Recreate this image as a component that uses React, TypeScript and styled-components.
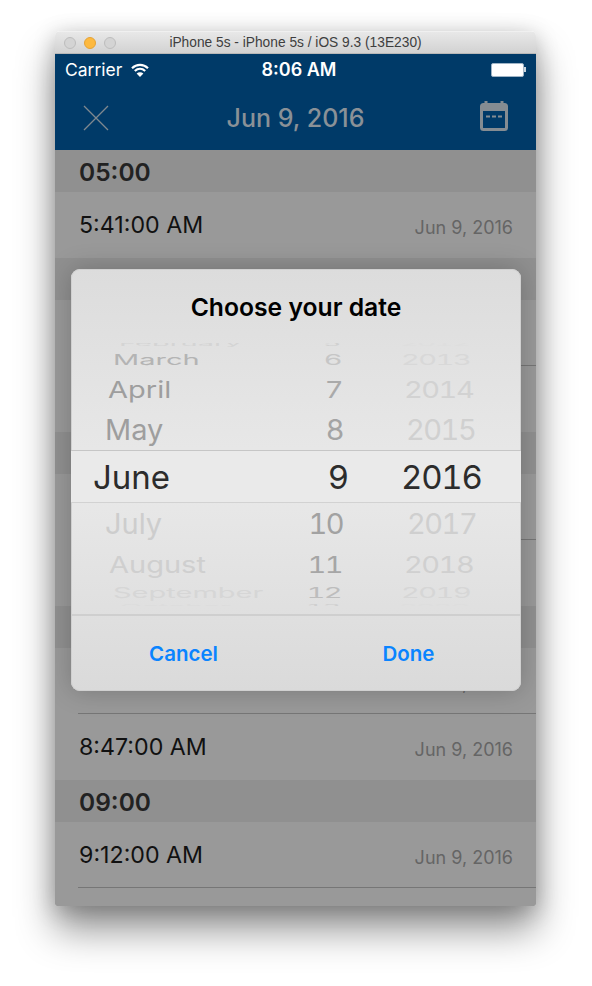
import React from 'react';
import styled, { createGlobalStyle } from 'styled-components';

const GlobalStyle = createGlobalStyle`
  html, body {
    margin: 0;
    background: #fff;
    font-family: 'Inter', 'Liberation Sans', sans-serif;
  }
`;

const Page = styled.div`
  width: 592px;
  height: 986px;
  padding: 31px 56px 0 55px;
  box-sizing: border-box;
  overflow: hidden;
`;

const SimWindow = styled.div`
  position: relative;
  height: 875px;
  border-radius: 5px 5px 2px 2px;
  overflow: hidden;
`;

const WindowShadow = styled.div`
  height: 875px;
  border-radius: 5px 5px 2px 2px;
  box-shadow: 0 24px 38px rgba(0, 0, 0, 0.42), 0 4px 22px rgba(0, 0, 0, 0.22);
`;

const TitleBar = styled.div`
  display: flex;
  align-items: center;
  justify-content: center;
  position: relative;
  height: 23px;
  box-sizing: border-box;
  background: linear-gradient(#e8e8e8, #d2d2d2);
  border-top: 1px solid #f0f0f0;
  border-bottom: 1px solid #b8b8b8;
  font: 400 13.75px 'Liberation Sans', sans-serif;
  color: #3e3e3e;
`;

const Lights = styled.div`
  position: absolute;
  left: 9px;
  top: 5px;
  display: flex;
  gap: 8px;
`;

const Light = styled.span<{ $on?: boolean }>`
  width: 12px;
  height: 12px;
  box-sizing: border-box;
  border-radius: 50%;
  background: ${({ $on }) => ($on ? '#fdb93f' : '#d4d4d4')};
  border: 1px solid ${({ $on }) => ($on ? '#e5a336' : '#bdbdbd')};
`;

const Header = styled.div`
  height: 96px;
  background: #003a68;
`;

const StatusBar = styled.div`
  display: grid;
  grid-template-columns: 1fr auto 1fr;
  align-items: center;
  height: 31px;
  padding: 0 10px;
  color: #fff;
`;

const Carrier = styled.div`
  display: flex;
  align-items: center;
  gap: 9px;
  font-size: 17.5px;
  font-weight: 400;
`;

const Clock = styled.div`
  padding-left: 7px;
  font-size: 18px;
  font-weight: 600;
`;

const Battery = styled.div`
  justify-self: end;
  display: flex;
  align-items: center;
`;

const BatteryBody = styled.span`
  width: 33px;
  height: 14px;
  box-sizing: border-box;
  background: #fff;
  border: 1px solid #9fb4c6;
  border-radius: 2px;
`;

const BatteryCap = styled.span`
  width: 2px;
  height: 5px;
  background: #c8d4de;
`;

const NavBar = styled.div`
  display: grid;
  grid-template-columns: 1fr auto 1fr;
  align-items: center;
  height: 65px;
  padding: 0 28px;
`;

const NavTitle = styled.div`
  font-size: 25px;
  font-weight: 500;
  color: #8a9197;
`;

const NavRight = styled.div`
  justify-self: end;
  display: flex;
  margin-bottom: 4px;
`;

const List = styled.div`
  height: 756px;
  background: #999;
  overflow: hidden;
`;

const Section = styled.div`
  display: flex;
  align-items: center;
  height: 42px;
  padding: 1px 0 0 24px;
  box-sizing: border-box;
  background: #909090;
  font-size: 24.5px;
  font-weight: 600;
  color: #222;
`;

const Row = styled.div<{ $line?: boolean }>`
  display: flex;
  align-items: center;
  justify-content: space-between;
  height: 66px;
  box-sizing: border-box;
  margin-left: 23px;
  padding: 0 23px 0 1px;
  border-bottom: 1px solid ${({ $line }) => ($line ? '#767676' : 'transparent')};
`;

const Time = styled.span`
  font-size: 23.2px;
  color: #111;
`;

const RowDate = styled.span`
  margin-top: 5px;
  font-size: 18px;
  color: #656565;
`;

const Modal = styled.div`
  position: absolute;
  left: 16px;
  top: 238px;
  width: 450px;
  height: 422px;
  box-sizing: border-box;
  display: flex;
  flex-direction: column;
  border-radius: 9px;
  overflow: hidden;
  background: linear-gradient(#dcdcdc, #e9e9e9 50%, #dadada);
  box-shadow: inset 0 0 0 1px #d0d0d0;
`;

const ModalGlow = styled.div`
  position: absolute;
  left: 16px;
  top: 238px;
  width: 450px;
  height: 422px;
  border-radius: 9px;
  box-shadow: 0 0 26px rgba(0, 0, 0, 0.22);
`;

const ModalTitle = styled.div`
  height: 74px;
  padding-top: 1px;
  box-sizing: border-box;
  display: flex;
  align-items: center;
  justify-content: center;
  font-size: 24.7px;
  font-weight: 600;
  color: #000;
`;

const Wheel = styled.div<{ $end?: boolean; $h: number }>`
  display: flex;
  flex-direction: column;
  height: ${({ $h }) => $h}px;
  justify-content: ${({ $end }) => ($end ? 'flex-end' : 'flex-start')};
  overflow: hidden;
  font-variant-numeric: tabular-nums;
`;

const WheelRow = styled.div<{ $h: number }>`
  flex: none;
  display: grid;
  grid-template-columns: 200px 80px 1fr;
  grid-template-rows: ${({ $h }) => $h}px;
  align-items: center;
  height: ${({ $h }) => $h}px;
`;

const Cell = styled.span<{ $scale: number; $color: string; $x: number }>`
  display: block;
  font-size: 29px;
  line-height: 1;
  white-space: nowrap;
  color: ${({ $color }) => $color};
  transform: translateX(${({ $x }) => $x}px) scaleY(${({ $scale }) => $scale});
`;

const YearCell = styled(Cell)`
  letter-spacing: -1.5px;
`;

const DayCell = styled(YearCell)`
  text-align: right;
`;

const Band = styled.div`
  display: grid;
  grid-template-columns: 200px 80px 1fr;
  align-items: center;
  height: 53px;
  padding-top: 1px;
  box-sizing: border-box;
  background: #eaeaea;
  border-top: 1px solid #c6c6c6;
  border-bottom: 1px solid #d2d2d2;
  font-size: 33px;
  font-variant-numeric: tabular-nums;
  color: #2c2c2c;
`;

const Picked = styled.span<{ $x: number }>`
  display: block;
  transform: translateX(${({ $x }) => $x}px);
`;

const PickedYear = styled(Picked)`
  letter-spacing: -1.25px;
`;

const PickedDay = styled(PickedYear)`
  text-align: right;
`;

const Footer = styled.div`
  display: grid;
  grid-template-columns: 1fr 1fr;
  margin-top: auto;
  height: 77px;
  border-top: 2px solid #cfcfcf;
  box-sizing: border-box;
`;

const ModalButton = styled.button`
  border: 0;
  padding: 0 0 1px;
  background: none;
  font: 600 20.5px 'Inter', 'Liberation Sans', sans-serif;
  color: #0a84ff;
`;

type WheelData = {
  h: number;
  scale: number;
  month: string;
  monthX: number;
  monthColor: string;
  day: string;
  dayX: number;
  dayColor: string;
  year: string;
  yearX: number;
  yearColor: string;
};

const above: WheelData[] = [
  { h: 10, scale: 0.2, month: 'February', monthX: 48, monthColor: '#d4d4d4', day: '5', dayX: -11, dayColor: '#d0d0d0', year: '2012', yearX: 49, yearColor: '#dedede' },
  { h: 22, scale: 0.5, month: 'March', monthX: 42, monthColor: '#b4b4b4', day: '6', dayX: -10, dayColor: '#c6c6c6', year: '2013', yearX: 50, yearColor: '#d8d8d8' },
  { h: 38, scale: 0.8, month: 'April', monthX: 37, monthColor: '#9e9e9e', day: '7', dayX: -9, dayColor: '#aaaaaa', year: '2014', yearX: 53, yearColor: '#d2d2d2' },
  { h: 42, scale: 0.97, month: 'May', monthX: 34, monthColor: '#9e9e9e', day: '8', dayX: -8, dayColor: '#a4a4a4', year: '2015', yearX: 55, yearColor: '#d0d0d0' },
];

const below: WheelData[] = [
  { h: 41, scale: 0.97, month: 'July', monthX: 34, monthColor: '#cdcdcd', day: '10', dayX: -8, dayColor: '#a2a2a2', year: '2017', yearX: 56, yearColor: '#cfcfcf' },
  { h: 40, scale: 0.78, month: 'August', monthX: 38, monthColor: '#cfcfcf', day: '11', dayX: -9, dayColor: '#a6a6a6', year: '2018', yearX: 53, yearColor: '#d0d0d0' },
  { h: 16, scale: 0.48, month: 'September', monthX: 42, monthColor: '#d6d6d6', day: '12', dayX: -10, dayColor: '#bdbdbd', year: '2019', yearX: 50, yearColor: '#d6d6d6' },
  { h: 12, scale: 0.2, month: 'October', monthX: 49, monthColor: '#dcdcdc', day: '13', dayX: -11, dayColor: '#cfcfcf', year: '2020', yearX: 48, yearColor: '#dedede' },
];

type ListItem = { section?: string; time?: string; date?: string; line?: boolean };

const items: ListItem[] = [
  { section: '05:00' },
  { time: '5:41:00 AM', date: 'Jun 9, 2016' },
  { section: ' ' },
  { line: true },
  {},
  { section: ' ' },
  { line: true },
  {},
  { section: ' ' },
  { date: 'Jun 9, 2016', line: true },
  { time: '8:47:00 AM', date: 'Jun 9, 2016' },
  { section: '09:00' },
  { time: '9:12:00 AM', date: 'Jun 9, 2016', line: true },
  {},
];

const WifiIcon = () => (
  <svg width="18" height="14" viewBox="0 0 18 14" fill="none" stroke="#fff" strokeWidth="2.2">
    <path d="M1 5.2C5.6 0.8 12.4 0.8 17 5.2" />
    <path d="M3.8 8C6.9 5.2 11.1 5.2 14.2 8" />
    <path d="M9 14L5.6 10.6C7.6 8.9 10.4 8.9 12.4 10.6Z" fill="#fff" stroke="none" />
  </svg>
);

const CloseIcon = () => (
  <svg width="26" height="26" viewBox="0 0 26 26" stroke="#7f888f" strokeWidth="1.3">
    <path d="M1 1L25 25M25 1L1 25" />
  </svg>
);

const CalendarIcon = () => (
  <svg width="28" height="30" viewBox="0 0 28 30" fill="none">
    <path d="M6 0V5M22 0V5" stroke="#858c92" strokeWidth="3" />
    <rect x="1.5" y="3.5" width="25" height="25" rx="2" stroke="#858c92" strokeWidth="3" />
    <rect x="1.5" y="3.5" width="25" height="6.5" fill="#858c92" />
    <path d="M6 15.5H10M12 15.5H16M18 15.5H22" stroke="#858c92" strokeWidth="2" />
  </svg>
);

const WheelCells = ({ row }: { row: WheelData }) => (
  <WheelRow $h={row.h}>
    <Cell $scale={row.scale} $color={row.monthColor} $x={row.monthX}>{row.month}</Cell>
    <DayCell $scale={row.scale} $color={row.dayColor} $x={row.dayX}>{row.day}</DayCell>
    <YearCell $scale={row.scale} $color={row.yearColor} $x={row.yearX}>{row.year}</YearCell>
  </WheelRow>
);

const App: React.FC = () => (
  <Page>
    <GlobalStyle />
    <WindowShadow>
      <SimWindow>
        <TitleBar>
          <Lights>
            <Light />
            <Light $on />
            <Light />
          </Lights>
          iPhone 5s - iPhone 5s / iOS 9.3 (13E230)
        </TitleBar>
        <Header>
          <StatusBar>
            <Carrier>
              Carrier
              <WifiIcon />
            </Carrier>
            <Clock>8:06 AM</Clock>
            <Battery>
              <BatteryBody />
              <BatteryCap />
            </Battery>
          </StatusBar>
          <NavBar>
            <CloseIcon />
            <NavTitle>Jun 9, 2016</NavTitle>
            <NavRight>
              <CalendarIcon />
            </NavRight>
          </NavBar>
        </Header>
        <List>
          {items.map((item, i) =>
            item.section ? (
              <Section key={i}>{item.section}</Section>
            ) : (
              <Row key={i} $line={item.line}>
                <Time>{item.time}</Time>
                <RowDate>{item.date}</RowDate>
              </Row>
            )
          )}
        </List>
        <ModalGlow />
        <Modal>
          <ModalTitle>Choose your date</ModalTitle>
          <Wheel $end $h={107}>
            {above.map((row) => (
              <WheelCells key={row.month} row={row} />
            ))}
          </Wheel>
          <Band>
            <Picked $x={22}>June</Picked>
            <PickedDay $x={-3}>9</PickedDay>
            <PickedYear $x={50}>2016</PickedYear>
          </Band>
          <Wheel $h={103}>
            {below.map((row) => (
              <WheelCells key={row.month} row={row} />
            ))}
          </Wheel>
          <Footer>
            <ModalButton>Cancel</ModalButton>
            <ModalButton>Done</ModalButton>
          </Footer>
        </Modal>
      </SimWindow>
    </WindowShadow>
  </Page>
);

export default App;
